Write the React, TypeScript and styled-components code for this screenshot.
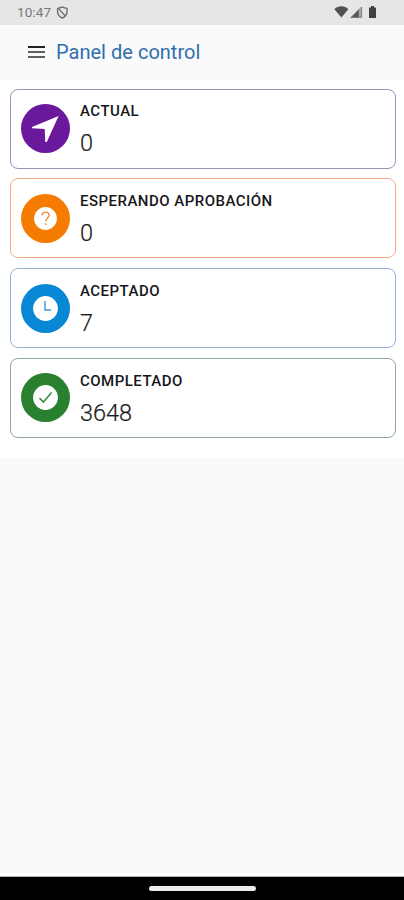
import React from "react";
import styled, { createGlobalStyle } from "styled-components";

const GlobalStyle = createGlobalStyle`
  * { box-sizing: border-box; }
  body { margin: 0; background: #fafafa; font-family: Roboto, "Liberation Sans", sans-serif; }
`;

const Screen = styled.div`
  height: 900px;
  display: flex;
  flex-direction: column;
  background: #fafafa;
  overflow: hidden;
`;

const StatusBar = styled.div`
  flex: none;
  height: 24.5px;
  padding: 0 25px 0 17px;
  display: flex;
  align-items: center;
  background: #e6e6e6;
`;

const Clock = styled.span`
  width: 34px;
  margin-right: 5px;
  font-size: 13.5px;
  line-height: 24px;
  letter-spacing: 0.1px;
  color: #777;
  white-space: nowrap;
`;

const SystemIcons = styled.div`
  margin-left: auto;
  display: flex;
  align-items: center;
`;

const Header = styled.header`
  flex: none;
  height: 55px;
  padding-left: 28px;
  display: flex;
  align-items: center;
  gap: 11px;
`;

const MenuButton = styled.button`
  width: 17px;
  height: 14px;
  padding: 0;
  border: 0;
  background: none;
  display: flex;
`;

const Title = styled.h1`
  margin: 0;
  font-size: 20px;
  font-weight: 400;
  line-height: 24px;
  letter-spacing: 0.02px;
  color: #2f6fae;
`;

const CardList = styled.main`
  flex: none;
  height: 378.5px;
  padding: 9px 8px 0 9.5px;
  display: flex;
  flex-direction: column;
  gap: 9.4px;
  background: #fff;
`;

const Card = styled.section<{ $border: string }>`
  flex: none;
  height: 80.3px;
  padding-left: 10.5px;
  display: flex;
  align-items: center;
  gap: 10px;
  border: 1px solid ${(p) => p.$border};
  border-radius: 8px;
  background: #fff;
`;

const Badge = styled.svg`
  width: 49px;
  height: 49px;
  flex: none;
`;

const CardText = styled.div`
  padding-top: 1.6px;
  display: flex;
  flex-direction: column;
  gap: 8px;
`;

const Label = styled.span`
  font-size: 15px;
  font-weight: 500;
  line-height: 20px;
  letter-spacing: 0.48px;
  color: #17171b;
`;

const Value = styled.span`
  font-size: 23.5px;
  font-weight: 300;
  line-height: 28px;
  color: #1c1c20;
  -webkit-text-stroke: 0.2px #1c1c20;
`;

const NavigationBar = styled.div`
  flex: none;
  height: 23px;
  margin-top: auto;
  display: flex;
  align-items: center;
  justify-content: center;
  background: #000;
  box-shadow: 0 -1px 0 #b5b5b5, 0 -4px 0 #fff;
`;

const HomeHandle = styled.div`
  width: 107px;
  height: 5px;
  border-radius: 2.5px;
  background: #ececec;
`;

const cards = [
  {
    label: "ACTUAL",
    value: "0",
    color: "#6a189c",
    border: "#9b91b8",
    icon: <path d="M37.6 12 11 22.9v1.4l12.7.8.6 12.9h1.5Z" fill="#fff" />,
  },
  {
    label: "ESPERANDO APROBACIÓN",
    value: "0",
    color: "#f57c00",
    border: "#f3a98c",
    icon: (
      <>
        <circle cx="24.5" cy="24.5" r="11.4" fill="#fff" />
        <path
          d="M21.1 21.4c.1-2 1.6-3.3 3.5-3.3s3.5 1.3 3.5 3.2c0 2.7-3.4 2.7-3.4 6.1M24.7 29.3v1.7"
          fill="none"
          stroke="#f28a3c"
          strokeWidth="1.4"
        />
      </>
    ),
  },
  {
    label: "ACEPTADO",
    value: "7",
    color: "#0787d4",
    border: "#8eb4dc",
    icon: (
      <>
        <circle cx="24.5" cy="24.5" r="12.4" fill="#fff" />
        <path d="M24 17v9h6" fill="none" stroke="#3c98d8" strokeWidth="1.4" />
      </>
    ),
  },
  {
    label: "COMPLETADO",
    value: "3648",
    color: "#29812f",
    border: "#8fab98",
    icon: (
      <>
        <circle cx="24.5" cy="24.5" r="12.4" fill="#fff" />
        <path d="m18.5 25 3.9 4.1 8.2-9.5" fill="none" stroke="#39883e" strokeWidth="1.5" />
      </>
    ),
  },
];

export default function App() {
  return (
    <>
      <GlobalStyle />
      <Screen>
        <StatusBar>
          <Clock>10:47</Clock>
          <svg width="13" height="13" viewBox="0 0 13 13" fill="none" stroke="#707070" strokeWidth="1.4">
            <path d="M6.3 1.1 11 2.5v3.3c0 3-1.700 5-4.700 6.200C3.300 10.800 1.600 8.800 1.600 5.800V2.500Z" />
            <path d="M2.600 2.600 9.300 10" />
          </svg>
          <SystemIcons>
            <svg width="45" height="14" viewBox="0 0 45 14">
              <path d="M.4 4.2C4.3.4 10.4.4 14.3 4.2L7.4 12.6Z" fill="#505050" />
              <path d="M16.4 12.8 28 1.2v11.6Z" fill="#aaa" />
              <path d="M16.4 12.8 24.8 4.4v8.4Z" fill="#555" />
              <path d="M27.6 2v10.3H17.5Z" fill="none" stroke="#777" strokeWidth=".8" />
              <path d="M35 2.4h2V1h3v1.4h2V13h-7Z" fill="#424242" />
            </svg>
          </SystemIcons>
        </StatusBar>
        <Header>
          <MenuButton aria-label="Menú">
            <svg width="17" height="14" viewBox="0 0 17 14">
              <path d="M0 2h17" stroke="#222" strokeWidth="2" />
              <path d="M0 7h17M0 12h17" stroke="#606060" strokeWidth="2" />
            </svg>
          </MenuButton>
          <Title>Panel de control</Title>
        </Header>
        <CardList>
          {cards.map((card) => (
            <Card key={card.label} $border={card.border}>
              <Badge viewBox="0 0 49 49">
                <circle cx="24.5" cy="24.5" r="24.5" fill={card.color} />
                {card.icon}
              </Badge>
              <CardText>
                <Label>{card.label}</Label>
                <Value>{card.value}</Value>
              </CardText>
            </Card>
          ))}
        </CardList>
        <NavigationBar>
          <HomeHandle />
        </NavigationBar>
      </Screen>
    </>
  );
}
